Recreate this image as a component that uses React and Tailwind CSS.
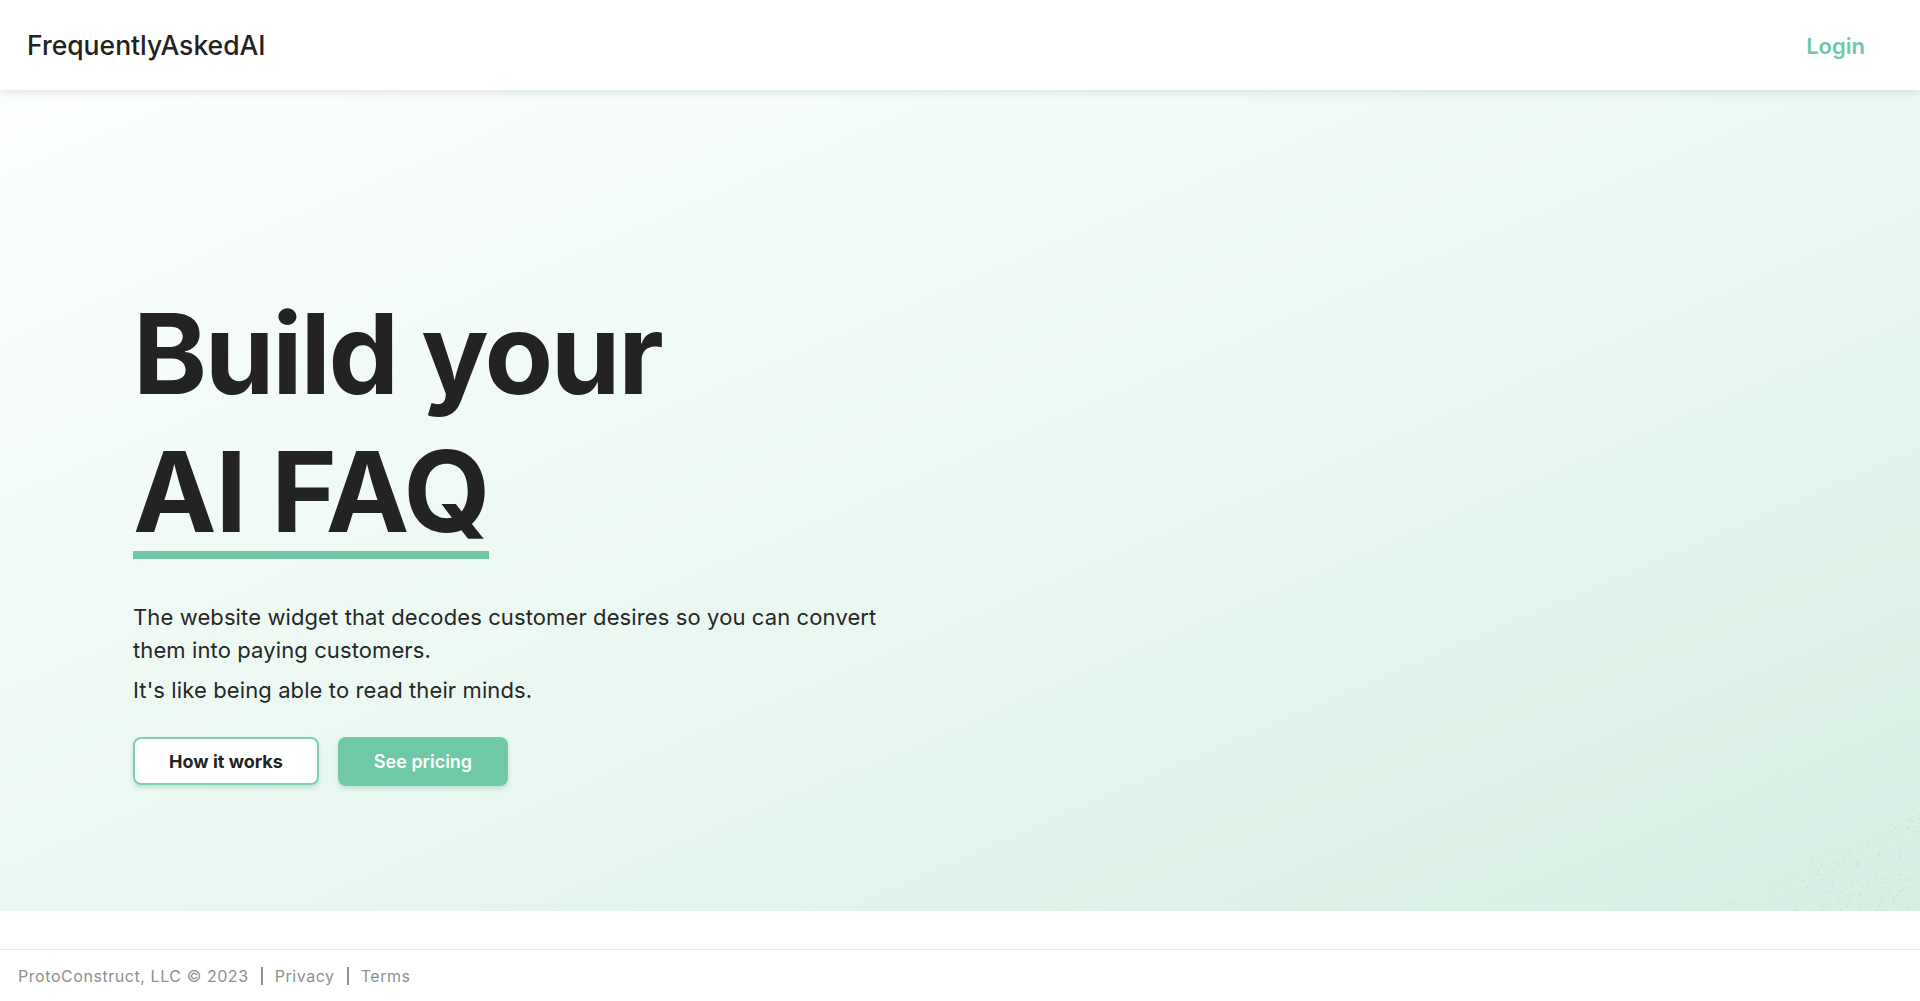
import { useMemo } from 'react';

// Faint dither of dots in the lower-right corner of the hero
function CornerDots() {
  const dots = useMemo(() => {
    let seed = 7;
    const rand = () => {
      seed = (seed * 16807) % 2147483647;
      return seed / 2147483647;
    };
    const out = [];
    for (let i = 0; i < 520; i++) {
      const x = rand() * 230;
      const y = rand() * 100;
      // triangle: more dots to the right, none above the diagonal
      const limit = 100 - x * 0.44;
      if (y < limit) continue;
      if (rand() > 0.35 + (x / 230) * 0.65) continue;
      out.push([x, y]);
    }
    return out;
  }, []);

  return (
    <svg className="absolute bottom-0 right-0" width="230" height="100" viewBox="0 0 230 100">
      {dots.map(([x, y], i) => (
        <rect key={i} x={x.toFixed(1)} y={y.toFixed(1)} width="1" height="1" fill="#b3d8c8" />
      ))}
    </svg>
  );
}

export default function App() {
  return (
    <div className="min-h-screen bg-white font-['Inter','Noto_Sans',sans-serif] text-[#232323]">
      <header className="relative z-10 flex h-[90px] items-center justify-between bg-white pl-[27px] pr-[55px] pt-[2px] shadow-[0_2px_8px_rgba(0,0,0,0.10)]">
        <div className="text-[26.5px] font-medium text-[#222]">FrequentlyAskedAI</div>
        <a href="#" className="text-[22px] font-semibold text-[#6fc9a6]">Login</a>
      </header>

      <section className="relative h-[821px] overflow-hidden bg-linear-to-br from-[#fbfefd] via-[#ebf8f2] to-[#d5efe3] pl-[133px] pt-[194px]">
        <h1 className="flex flex-col text-[112px] font-bold text-[#232323]">
          <span className="leading-[138px] tracking-[-0.02em]">Build your</span>
          <span className="mt-[9px] w-fit border-b-8 border-[#6fc9a6] leading-[120px] tracking-[-0.01em]">AI FAQ</span>
        </h1>

        <div className="mt-[42px] max-w-[768px] text-[22px] leading-[33px] tracking-[0.005em] text-[#272727]">
          <p>The website widget that decodes customer desires so you can convert them into paying customers.</p>
          <p className="mt-[7px]">It's like being able to read their minds.</p>
        </div>

        <div className="mt-[30px] flex gap-[19px]">
          <button className="h-[48px] w-[186px] rounded-lg border-2 border-[#7fcfb0] bg-white text-[18px] font-bold text-[#232323] shadow-[0_3px_4px_rgba(80,160,130,0.25)]">
            How it works
          </button>
          <button className="h-[49px] w-[170px] rounded-lg bg-[#6fc9a6] text-[18px] font-semibold text-white shadow-[0_3px_4px_rgba(80,160,130,0.25)]">
            See pricing
          </button>
        </div>

        <CornerDots />
      </section>

      <footer className="mt-[38px] flex h-[52px] items-center border-t border-[#e3e6e5] pl-[18px] text-[16px] tracking-[0.035em] text-[#8b9190]">
        <span>ProtoConstruct, LLC © 2023</span>
        <span className="mx-3 inline-block h-[18px] w-[2px] bg-[#8b9190]" />
        <a href="#">Privacy</a>
        <span className="mx-3 inline-block h-[18px] w-[2px] bg-[#8b9190]" />
        <a href="#">Terms</a>
      </footer>
    </div>
  );
}
